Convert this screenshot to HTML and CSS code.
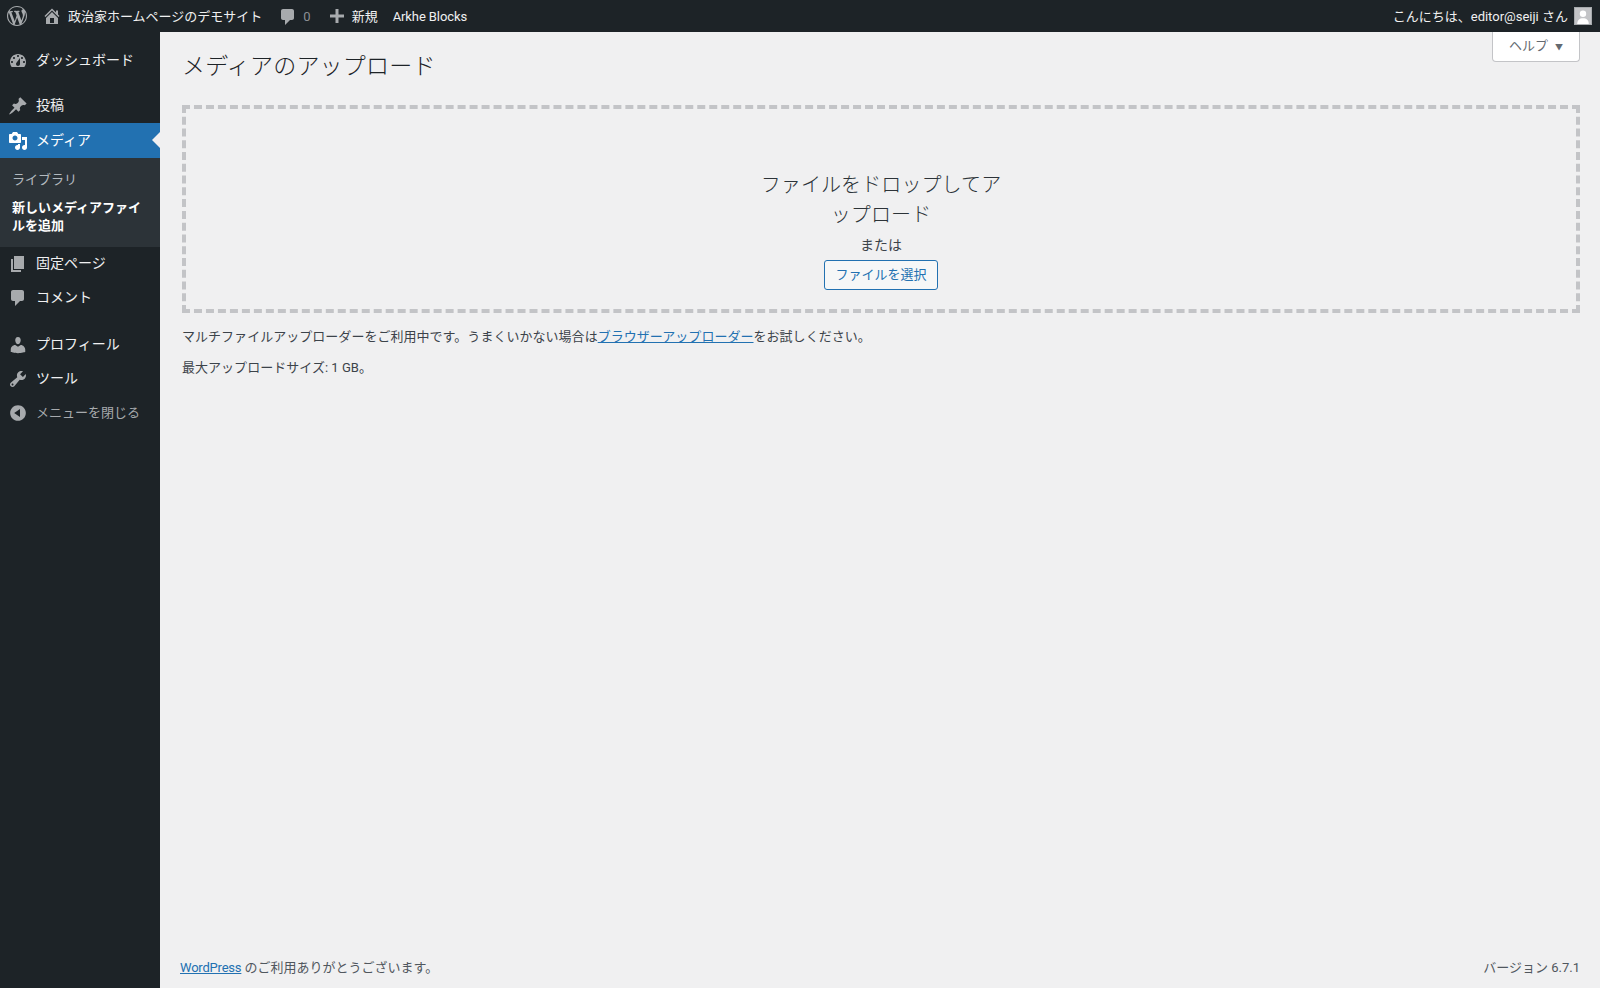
FILE: index.html
```html
<!DOCTYPE html>
<html lang="ja">
<head>
    <meta charset="UTF-8">
    <meta name="viewport" content="width=device-width, initial-scale=1.0">
    <title>メディアのアップロード</title>
    <link rel="stylesheet" href="styles.css">
</head>
<body>
    <header class="adminbar">
        <div class="adminbar-left">
            <svg class="bar-icon wp-logo" viewBox="0 0 20 20"><path d="M20 10c0-5.51-4.49-10-10-10C4.48 0 0 4.49 0 10c0 5.52 4.48 10 10 10 5.51 0 10-4.48 10-10zM7.78 15.37L4.37 6.22c.55-.02 1.17-.08 1.17-.08.5-.06.44-1.13-.06-1.11 0 0-1.45.11-2.37.11-.18 0-.37 0-.58-.01C4.12 2.69 6.87 1.11 10 1.11c2.33 0 4.45.87 6.05 2.34-.68-.11-1.65.39-1.65 1.58 0 .74.45 1.36.9 2.1.35.61.55 1.36.55 2.46 0 1.49-1.4 5-1.4 5l-3.03-8.37c.54-.02.82-.17.82-.17.5-.05.44-1.25-.06-1.22 0 0-1.44.12-2.38.12-.87 0-2.33-.12-2.33-.12-.5-.03-.56 1.2-.06 1.22l.92.08 1.26 3.41zM17.41 10c.24-.64.74-1.87.43-4.25.7 1.29 1.05 2.71 1.05 4.25 0 3.29-1.73 6.24-4.4 7.78.97-2.59 1.94-5.2 2.92-7.78zM6.1 18.09C3.12 16.65 1.11 13.53 1.11 10c0-1.3.23-2.48.72-3.59C3.25 10.3 4.67 14.2 6.1 18.09zm4.03-6.63l2.58 6.98c-.86.29-1.76.45-2.71.45-.79 0-1.57-.11-2.29-.33.81-2.38 1.62-4.74 2.42-7.1z"/></svg>
            <a class="bar-item site-name" href="#">
                <svg class="bar-icon" viewBox="0 0 20 20"><path d="M16 8.5l1.53 1.53-1.06 1.06L10 4.62l-6.47 6.47-1.06-1.06L10 2.5l4 4v-2h2v4zm-6-2.46l6 5.99V18H4v-5.97zM12 17v-5H8v5h4z"/></svg>
                <span>政治家ホームページのデモサイト</span>
            </a>
            <a class="bar-item comments" href="#">
                <svg class="bar-icon" viewBox="0 0 20 20"><path d="M5 2h9c1.1 0 2 .9 2 2v7c0 1.1-.9 2-2 2h-2l-5 5v-5H5c-1.1 0-2-.9-2-2V4c0-1.1.9-2 2-2z"/></svg>
                <span class="count">0</span>
            </a>
            <a class="bar-item new-item" href="#">
                <svg class="bar-icon" viewBox="0 0 20 20"><path d="M17 8.5v3h-5.500v5.500h-3v-5.500H3v-3h5.500V3h3v5.500H17z"/></svg>
                <span>新規</span>
            </a>
            <a class="bar-item arkhe" href="#"><span>Arkhe Blocks</span></a>
        </div>
        <a class="bar-item account" href="#">
            <span>こんにちは、editor@seiji さん</span>
            <span class="avatar">
                <svg viewBox="0 0 18 18"><circle cx="9" cy="6.500" r="3.600"/><path d="M2.500 18c0-4.500 2.500-6.500 6.500-6.500s6.500 2 6.500 6.500z"/></svg>
            </span>
        </a>
    </header>

    <div class="wrap">
        <nav class="sidemenu">
            <ul class="menu">
                <li class="menu-item sep-after">
                    <svg class="menu-icon" viewBox="0 0 20 20"><path fill-rule="evenodd" d="M3.760 16h12.480c1.100-1.370 1.760-3.110 1.760-5 0-4.420-3.580-8-8-8s-8 3.580-8 8c0 1.890.660 3.630 1.760 5zM10 4c.550 0 1 .450 1 1s-.450 1-1 1-1-.450-1-1 .450-1 1-1zM6 6c.550 0 1 .450 1 1s-.450 1-1 1-1-.450-1-1 .450-1 1-1zm8 0c.550 0 1 .450 1 1s-.450 1-1 1-1-.450-1-1 .450-1 1-1zm-5.370 5.550L12 7v6c0 1.100-.900 2-2 2s-2-.900-2-2c0-.570.240-1.080.630-1.450zM4 10c.550 0 1 .450 1 1s-.450 1-1 1-1-.450-1-1 .450-1 1-1zm12 0c.550 0 1 .450 1 1s-.450 1-1 1-1-.450-1-1 .450-1 1-1z"/></svg>
                    <span>ダッシュボード</span>
                </li>
                <li class="menu-item">
                    <svg class="menu-icon" viewBox="0 0 20 20"><path d="M10.440 3.020l1.820-1.820 6.360 6.350-1.830 1.820c-1.050-.680-2.480-.570-3.410.360l-.750.750c-.920.930-1.040 2.350-.350 3.410l-1.830 1.820-2.410-2.410-2.800 2.790c-.420.420-3.380 2.710-3.800 2.290s1.860-3.390 2.280-3.810l2.790-2.790L4.100 9.360l1.830-1.820c1.050.690 2.480.570 3.400-.360l.750-.750c.930-.920 1.050-2.350.360-3.410z"/></svg>
                    <span>投稿</span>
                </li>
                <li class="menu-item current">
                    <svg class="menu-icon" viewBox="0 0 20 20"><path fill-rule="evenodd" d="M13 11V4c0-.550-.450-1-1-1h-1.670L9 1H5L3.670 3H2c-.550 0-1 .450-1 1v7c0 .550.450 1 1 1h10c.550 0 1-.450 1-1zM7 4.500c1.380 0 2.500 1.120 2.500 2.500S8.380 9.500 7 9.500 4.500 8.380 4.500 7 5.620 4.500 7 4.500zM14 6h5v10.500c0 1.380-1.120 2.500-2.500 2.500S14 17.880 14 16.500s1.120-2.500 2.500-2.500c.170 0 .340.020.500.050V9h-3V6zm-4 8.050V13h2v3.500c0 1.380-1.120 2.500-2.500 2.500S7 17.880 7 16.500 8.120 14 9.500 14c.170 0 .340.020.500.050z"/></svg>
                    <span>メディア</span>
                </li>
                <li class="submenu">
                    <a class="submenu-link" href="#">ライブラリ</a>
                    <a class="submenu-link active" href="#">新しいメディアファイルを追加</a>
                </li>
                <li class="menu-item">
                    <svg class="menu-icon" viewBox="0 0 20 20"><path d="M6 15V2h10v13H6zm-1 1h8v2H3V5h2v11z"/></svg>
                    <span>固定ページ</span>
                </li>
                <li class="menu-item sep-after sep-wide">
                    <svg class="menu-icon" viewBox="0 0 20 20"><path d="M5 2h9c1.100 0 2 .900 2 2v7c0 1.100-.900 2-2 2h-2l-5 5v-5H5c-1.100 0-2-.900-2-2V4c0-1.100.900-2 2-2z"/></svg>
                    <span>コメント</span>
                </li>
                <li class="menu-item">
                    <svg class="menu-icon" viewBox="0 0 20 20"><path d="M10 9.250c-2.270 0-2.730-3.440-2.730-3.440C7 4.020 7.820 2 9.970 2c2.160 0 2.980 2.020 2.710 3.810 0 0-.410 3.440-2.680 3.440zm0 2.570L12.720 10c2.390 0 4.520 2.330 4.520 4.530v2.490s-3.650 1.130-7.240 1.130c-3.650 0-7.240-1.130-7.240-1.130v-2.490c0-2.250 1.940-4.480 4.470-4.480z"/></svg>
                    <span>プロフィール</span>
                </li>
                <li class="menu-item">
                    <svg class="menu-icon" viewBox="0 0 20 20"><path fill-rule="evenodd" d="M16.680 9.770c-1.340 1.340-3.300 1.670-4.950.990l-5.410 6.520c-.990.990-2.590.990-3.580 0s-.990-2.590 0-3.570l6.520-5.420c-.680-1.650-.350-3.610.990-4.950 1.280-1.280 3.120-1.620 4.720-1.060l-2.890 2.890 2.820 2.820 2.860-2.870c.530 1.580.180 3.390-1.080 4.650zM3.810 16.210c.400.390 1.040.390 1.430 0 .400-.400.400-1.040 0-1.430-.390-.400-1.030-.400-1.430 0-.390.390-.390 1.030 0 1.430z"/></svg>
                    <span>ツール</span>
                </li>
                <li class="menu-item collapse">
                    <svg class="menu-icon" viewBox="0 0 20 20"><path fill-rule="evenodd" d="M10 2.160c4.330 0 7.840 3.510 7.840 7.840s-3.510 7.840-7.840 7.840S2.160 14.330 2.160 10 5.710 2.160 10 2.160zm2 11.720V6.120L6.180 9.970z"/></svg>
                    <span>メニューを閉じる</span>
                </li>
            </ul>
        </nav>

        <main class="content">
            <div class="page-head">
                <h1>メディアのアップロード</h1>
                <button class="help-tab">ヘルプ <span class="help-arrow">▼</span></button>
            </div>

            <section class="dropzone">
                <p class="drop-title">ファイルをドロップしてアップロード</p>
                <p class="drop-or">または</p>
                <button class="select-btn">ファイルを選択</button>
            </section>

            <p class="note note-first">マルチファイルアップローダーをご利用中です。うまくいかない場合は<a href="#">ブラウザーアップローダー</a>をお試しください。</p>
            <p class="note">最大アップロードサイズ: 1 GB。</p>

            <footer class="page-foot">
                <span><a class="foot-link" href="#">WordPress</a> のご利用ありがとうございます。</span>
                <span>バージョン 6.7.1</span>
            </footer>
        </main>
    </div>
</body>
</html>
```

FILE: styles.css
```css
* {
    box-sizing: border-box;
}
html, body {
    height: 100%;
}
body {
    margin: 0;
    display: flex;
    flex-direction: column;
    min-height: 988px;
    background: #f0f0f1;
    color: #3c434a;
    font-family: Roboto, "Noto Sans CJK JP", sans-serif;
    font-size: 13px;
    line-height: 1.4;
    overflow: hidden;
}
a {
    color: #2271b1;
}

/* top bar */
.adminbar {
    height: 32px;
    flex: none;
    display: flex;
    justify-content: space-between;
    background: #1d2327;
    color: #f0f0f1;
}
.adminbar-left {
    display: flex;
    align-items: center;
}
.bar-item {
    display: flex;
    align-items: center;
    height: 32px;
    color: #f0f0f1;
    text-decoration: none;
    line-height: 32px;
}
.bar-item > span {
    padding-top: 2px;
}
.bar-icon {
    width: 20px;
    height: 20px;
    fill: #a7aaad;
    flex: none;
}
.wp-logo {
    margin: 0 15px 0 7px;
}
.site-name {
    gap: 6px;
}
.comments {
    margin-left: 16px;
    gap: 5px;
}
.comments .bar-icon {
    margin-top: 2px;
}
.count {
    color: #8c8f94;
}
.new-item {
    margin-left: 16px;
    gap: 5px;
}
.arkhe {
    margin-left: 15px;
    letter-spacing: -0.1px;
}
.account {
    padding-right: 8px;
    gap: 6px;
}
.account > .avatar {
    width: 18px;
    height: 18px;
    padding: 0;
    background: #c3c4c7;
    border: 1px solid #a7aaad;
    overflow: hidden;
}
.avatar svg {
    display: block;
    width: 16px;
    height: 16px;
    fill: #fff;
}

/* side menu */
.wrap {
    flex: 1;
    display: flex;
    min-height: 0;
}
.sidemenu {
    width: 160px;
    flex: none;
    background: #1d2327;
}
.menu {
    list-style: none;
    margin: 12px 0 0;
    padding: 0;
}
.menu-item {
    position: relative;
    display: flex;
    align-items: center;
    height: 34px;
    padding-left: 8px;
    gap: 8px;
    color: #f0f0f1;
    font-size: 14px;
}
.sep-after {
    margin-bottom: 11px;
}
.sep-wide {
    margin-bottom: 13px;
}
.menu-icon {
    width: 20px;
    height: 20px;
    flex: none;
    fill: #a7aaad;
}
.current {
    height: 35px;
    background: #2271b1;
    color: #fff;
}
.current .menu-icon {
    fill: #fff;
}
.current::after {
    content: "";
    position: absolute;
    right: 0;
    top: 9px;
    border: 8px solid transparent;
    border-right-color: #f0f0f1;
    border-left-width: 0;
}
.submenu {
    display: flex;
    flex-direction: column;
    padding: 8px 0 7px;
    background: #2c3338;
    font-size: 13px;
    line-height: 18px;
}
.submenu-link {
    padding: 5px 12px;
    color: rgba(240, 246, 252, 0.7);
    text-decoration: none;
}
.submenu-link.active {
    color: #fff;
    font-weight: 600;
}
.collapse {
    color: #a7aaad;
    font-size: 13px;
}

/* main */
.content {
    flex: 1;
    display: flex;
    flex-direction: column;
    min-width: 0;
    padding: 0 20px 0 22px;
}
.page-head {
    display: flex;
    justify-content: space-between;
    align-items: flex-start;
    height: 73px;
}
h1 {
    margin: 17px 0 0;
    color: #1d2327;
    font-size: 23px;
    font-weight: 300;
    line-height: 36px;
    letter-spacing: 0.2px;
}
.help-tab {
    width: 88px;
    height: 30px;
    padding: 0;
    border: 1px solid #c3c4c7;
    border-top: none;
    border-radius: 0 0 4px 4px;
    background: #fff;
    color: #646970;
    font: inherit;
}
.help-arrow {
    margin-left: 4px;
    font-size: 8px;
}
.dropzone {
    height: 208px;
    padding-top: 61px;
    border: 4px dashed #c3c4c7;
    text-align: center;
}
.drop-title {
    width: 250px;
    margin: 0 auto;
    color: #2c3338;
    font-size: 20px;
    font-weight: 300;
    line-height: 30px;
    letter-spacing: 0.1px;
}
.drop-or {
    margin: 5px 0 5px;
    font-size: 14px;
    line-height: 20px;
}
.select-btn {
    height: 30px;
    padding: 0 10px;
    border: 1px solid #2271b1;
    border-radius: 3px;
    background: #f6f7f7;
    color: #2271b1;
    font: inherit;
}
.note {
    margin: 13px 0 0;
    line-height: 18px;
    letter-spacing: 0.03px;
}
.note-first {
    margin-top: 15px;
}
.page-foot {
    display: flex;
    justify-content: space-between;
    margin-top: auto;
    margin-left: -2px;
    padding-bottom: 10px;
    line-height: 20px;
    color: #50575e;
}
.foot-link {
    letter-spacing: -0.2px;
}
```
